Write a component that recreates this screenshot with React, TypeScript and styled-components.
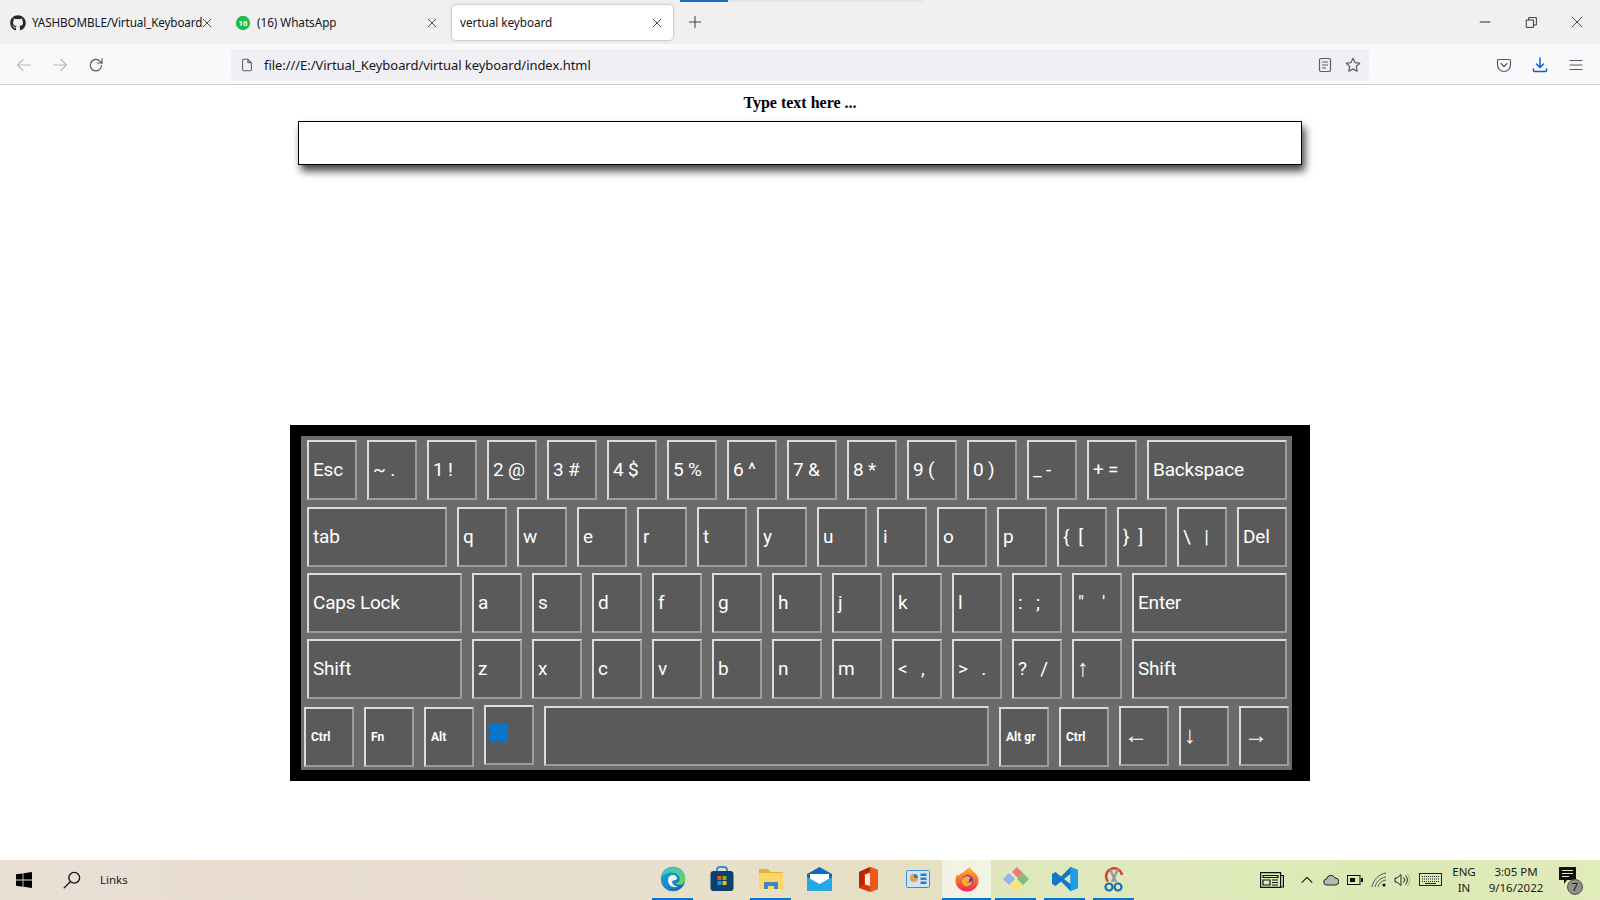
import React from "react";
import styled, { createGlobalStyle } from "styled-components";
import { FaGithub } from "react-icons/fa";

const Global = createGlobalStyle`
  html, body { margin: 0; padding: 0; height: 100%; background: #fff; overflow: hidden; }
  * { box-sizing: border-box; }
`;
const UI = `"Noto Sans", "Open Sans", Arial, sans-serif`;

const Page = styled.div`display: flex; flex-direction: column; width: 1600px; height: 900px; background: #fff;`;

/* ---------- browser chrome ---------- */
const TabStrip = styled.header`
  position: relative; display: flex; align-items: flex-start; height: 44px; padding: 5px 0 0 2px; gap: 3px;
  background: #f0f0f0; font: 11.7px ${UI}; color: #15141a;
`;
const Progress = styled.div`position: absolute; left: 680px; top: 0; width: 242px; height: 2px; background: #e4e4e4;`;
const ProgressFill = styled.div`width: 48px; height: 2px; background: #1a6fc4;`;
const Tab = styled.div<{ $active?: boolean; $w?: number; $pr?: number }>`
  display: flex; align-items: center; gap: 6px; height: 35px; width: ${p => p.$w ?? 221}px; padding: 0 ${p => p.$pr ?? 10}px 0 8px;
  border-radius: 4px; background: ${p => (p.$active ? "#fff" : "transparent")};
  box-shadow: ${p => (p.$active ? "0 0 3px rgba(0,0,0,.35)" : "none")};
`;
const TabTitle = styled.span<{ $tight?: boolean }>`
  flex: 1; min-width: 0; white-space: nowrap; padding-bottom: 2px; letter-spacing: ${p => (p.$tight ? -0.12 : -0.02)}px;
`;
const Fav = styled.span`display: flex; width: 16px; height: 16px; flex: none; font-size: 16px; color: #24292f;`;
const NewTab = styled.div`display: flex; align-items: center; justify-content: center; width: 36px; height: 35px; margin-left: 1px; padding-bottom: 1px;`;
const WinControls = styled.div`display: flex; margin-left: auto; margin-top: -5px;`;
const WinButton = styled.div`display: flex; align-items: center; justify-content: center; width: 46px; height: 44px;`;

const Toolbar = styled.nav`
  display: flex; align-items: center; height: 41px; padding: 1px 0 0 6px; background: #f9f9fb;
  border-bottom: 1px solid #cfcfd2;
`;
const ToolBtn = styled.div`display: flex; align-items: center; justify-content: center; width: 36px; height: 32px; flex: none;`;
const NavGroup = styled.div`display: flex; width: 225px; flex: none;`;
const UrlBar = styled.div`
  display: flex; align-items: center; width: 1138px; height: 32px; padding: 0 2px 0 9px; border-radius: 4px; background: #f0f0f4;
  font: 13px ${UI}; color: #15141a; letter-spacing: -0.05px;
`;
const UrlText = styled.span`flex: 1; margin-left: 10px; white-space: pre;`;
const UrlBtn = styled.div`display: flex; align-items: center; justify-content: center; width: 28px; height: 28px;`;
const ToolRight = styled.div`display: flex; margin-left: auto; padding-right: 6px;`;

/* ---------- content ---------- */
const Main = styled.main`flex: 1; display: flex; flex-direction: column; align-items: center; padding-top: 9px;`;
const Label = styled.label`font: bold 16px/18px "Liberation Serif", "Times New Roman", serif; color: #000; margin-bottom: 9px;`;
const TextBox = styled.input`
  display: block; width: 1004px; height: 44px; border: 1px solid #000; border-radius: 0; background: #fff; outline: none;
  box-shadow: 3px 6px 8px #444;
`;
const Frame = styled.section`
  width: 1020px; height: 356px; margin-top: 260px; padding: 11px 18px 11px 11px; background: #000;
`;
const Deck = styled.div`
  display: flex; flex-direction: column; gap: 6px; height: 334px; padding-top: 4px; background: #6b6b6b;
`;
const Row = styled.div<{ $inset?: number; $extra?: number }>`
  display: flex; gap: 10px; padding-left: ${p => p.$inset ?? 6}px; margin-bottom: ${p => p.$extra ?? 0}px;
`;
const Key = styled.div<{ $w?: number; $kind?: "small" | "arrow"; $drop?: number }>`
  display: flex; align-items: center; width: ${p => p.$w ?? 50}px; height: 60px; flex: none;
  padding-left: ${p => (p.$kind === "small" ? 5 : p.$kind === "arrow" ? 3 : 4)}px;
  padding-bottom: ${p => (p.$kind === "small" ? 0 : p.$kind === "arrow" ? 3 : 2)}px;
  margin-top: ${p => p.$drop ?? 0}px;
  border: 2px solid; border-color: #dcdcdc #9c9c9c #9c9c9c #dcdcdc; background: #5a5a5a; color: #fff;
  font: ${p =>
    p.$kind === "small" ? `bold 12px Roboto, Arial, sans-serif`
    : p.$kind === "arrow" ? `24px "Liberation Sans", Arial, sans-serif`
    : `19px Roboto, Arial, sans-serif`};
  letter-spacing: ${p => (p.$kind ? 0 : -0.2)}px;
  white-space: pre;
`;
const WinLogo = styled.svg`display: block; margin-top: -2px;`;

/* ---------- taskbar ---------- */
const Taskbar = styled.footer`
  display: flex; align-items: stretch; height: 40px;
  background: linear-gradient(90deg, #eadfd4 0%, #e9ddd2 20%, #e8dfcc 40%, #e6e0c2 58%, #dfe7bd 64%, #dfe9ba 75%, #dce9b4 88%, #e1ebbb 100%);
  font: 11.5px ${UI}; color: #1a1a1a;
`;
const LeftGroup = styled.div`display: flex; align-items: center; width: 648px; flex: none;`;
const StartBtn = styled.div`display: flex; align-items: center; justify-content: center; width: 48px; height: 40px;`;
const Links = styled.span`margin-left: 4px; padding-bottom: 2px;`;
const Apps = styled.div`display: flex;`;
const App_ = styled.div<{ $open?: boolean; $focus?: boolean }>`
  position: relative; display: flex; align-items: center; justify-content: center; width: 49px; height: 40px; padding-bottom: 2px;
  background: ${p => (p.$focus ? "rgba(255,255,255,.55)" : "transparent")};
  &::after {
    content: ""; display: ${p => (p.$open ? "block" : "none")}; position: absolute; bottom: 0; height: 2px; background: #0078d4;
    left: ${p => (p.$focus ? 0 : 4)}px; right: ${p => (p.$focus ? 0 : 4)}px;
  }
`;
const Tray = styled.div`display: flex; margin-left: auto; padding-right: 15px;`;
const TrayItem = styled.div<{ $w: number }>`
  position: relative; display: flex; flex-direction: column; align-items: center; justify-content: center;
  width: ${p => p.$w}px; height: 40px; padding-bottom: 1px; line-height: 16px; text-align: center;
`;
const NotifyBadge = styled.span`
  position: absolute; left: 16px; top: 19px; width: 16px; height: 16px; border-radius: 50%; background: #8f8f88;
  border: 1px solid #555; font: 11px/14px ${UI}; color: #111; text-align: center;
`;

/* ---------- icons ---------- */
const S = (p: React.SVGProps<SVGSVGElement> & { s?: number; c?: string }) => {
  const { s = 16, c = "#5b5b66", ...r } = p;
  return <svg width={s} height={s} viewBox="0 0 16 16" fill="none" stroke={c} strokeWidth={1.2} strokeLinecap="round" strokeLinejoin="round" {...r} />;
};
const CloseX = ({ s = 12, c = "#3a3a40" }: { s?: number; c?: string }) => (
  <S s={s} c={c} style={{ flex: "none" }}><path d="M2.5 2.5l11 11M13.5 2.5l-11 11" strokeLinecap="butt" /></S>
);
const WaFav = () => (
  <svg width="16" height="16" viewBox="0 0 16 16"><circle cx="8" cy="8" r="7.2" fill="#1ebe4d" /><text x="8" y="11" fontSize="8" fontWeight="700" fontFamily="Roboto, sans-serif" fill="#fff" textAnchor="middle">16</text></svg>
);

const Edge = () => (
  <svg width="26" height="26" viewBox="0 0 26 26">
    <defs>
      <linearGradient id="eg" x1="0" y1="0" x2="1" y2="1"><stop offset="0" stopColor="#1fa5d8" /><stop offset=".55" stopColor="#1b86cf" /><stop offset="1" stopColor="#0c59a4" /></linearGradient>
      <linearGradient id="eg2" x1="0" y1="0" x2="1" y2="1"><stop offset="0" stopColor="#35c1c9" /><stop offset="1" stopColor="#6fd65a" /></linearGradient>
    </defs>
    <circle cx="13" cy="13" r="12.2" fill="url(#eg)" />
    <path d="M13 .8C20 .8 25.2 6 25.2 13c0 3.5-2.4 5.8-5.6 5.8-2 0-3.6-.6-4.4-1.5 2.6-.3 4.6-2 4.6-4.3 0-3.4-3.4-6.6-8-6.6C7 6.4 3.6 8.5 1.6 11.4 2.6 5.4 7.3.8 13 .8z" fill="url(#eg2)" />
    <path d="M8 14c0-3 2.4-5 5-5 2.4 0 4 1.6 4 3.2 0 1.3-1.4 2-2.8 2-1.8 0-2.5 1.2-1.8 3 .7 1.8 3 3 5.4 3-2 1.2-5.6 1.4-7.4-.4C8.700 18.200 8 16.200 8 14z" fill="#eef6e8" />
  </svg>
);
const Store = () => (
  <svg width="24" height="26" viewBox="0 0 24 26">
    <path d="M7 6V4a3 3 0 013-3h4a3 3 0 013 3v2" fill="none" stroke="#2f8fd6" strokeWidth="2" />
    <rect x="0.500" y="5" width="23" height="20" rx="3" fill="#0f3f6f" />
    <rect x="7.500" y="10" width="4" height="4" fill="#f25022" /><rect x="12.500" y="10" width="4" height="4" fill="#7fba00" />
    <rect x="7.500" y="15" width="4" height="4" fill="#00a4ef" /><rect x="12.500" y="15" width="4" height="4" fill="#ffb900" />
  </svg>
);
const Folder = () => (
  <svg width="24" height="22" viewBox="0 0 24 22">
    <path d="M0 2a1 1 0 011-1h8l3 3h11a1 1 0 011 1v15a1 1 0 01-1 1H1a1 1 0 01-1-1z" fill="#e5b23a" />
    <rect y="5" width="24" height="16" rx="1" fill="#fbd669" />
    <path d="M5 21v-7h14v7h-4v-3H9v3z" fill="#3d86c6" />
  </svg>
);
const Mail = () => (
  <svg width="25" height="24" viewBox="0 0 25 24">
    <path d="M0 7L12.500 0 25 7v16a1 1 0 01-1 1H1a1 1 0 01-1-1z" fill="#0f6cbd" />
    <path d="M3 7h19v7l-9.500 5L3 14z" fill="#fff" />
    <path d="M0 10l12.500 7L25 10v13a1 1 0 01-1 1H1a1 1 0 01-1-1z" fill="#29a6e6" />
  </svg>
);
const Office = () => (
  <svg width="19" height="25" viewBox="0 0 19 25">
    <path d="M0 5l11-5 8 3v19l-8 3-11-4z" fill="#d83b01" />
    <path d="M11 0l8 3v19l-8 3z" fill="#ea5a1e" />
    <path d="M6 7.500l5-1.500v13l-5-1.500z" fill="#fbe9df" />
    <path d="M0 5l11-5v4L5 6.500v11.300L0 21z" fill="#b7260f" />
  </svg>
);
const Panel = () => (
  <svg width="24" height="18" viewBox="0 0 24 18">
    <rect x=".5" y=".5" width="23" height="17" rx="1" fill="#cfe6f7" stroke="#3f8fcf" />
    <circle cx="8" cy="8" r="4" fill="#e9a23b" /><path d="M8 8V4a4 4 0 014 4z" fill="#2f7fc4" />
    <rect x="14.500" y="3.500" width="6" height="2.500" fill="#2f7fc4" /><rect x="14.500" y="7.500" width="6" height="2.500" fill="#2f7fc4" /><rect x="14.500" y="11.500" width="6" height="2.500" fill="#2f7fc4" />
  </svg>
);
const Firefox = () => (
  <svg width="24" height="25" viewBox="0 0 24 25">
    <defs><linearGradient id="ff" x1="0" y1="0" x2="0" y2="1"><stop offset="0" stopColor="#ffb52e" /><stop offset=".55" stopColor="#ff6a2b" /><stop offset="1" stopColor="#e8275a" /></linearGradient></defs>
    <path d="M12 24.500C5.500 24.500 .5 19.500 .5 13.500c0-2.500.8-5 2-6.500l1 2C5 6.500 7 5.500 8.500 5.500 10 3 13 2 15 0c.5 2.500 2 3 4 5 3 2.500 4.500 5.500 4.500 8.500 0 6-5 11-11.500 11z" fill="url(#ff)" />
    <circle cx="12.500" cy="13.500" r="5.500" fill="#6b2fb5" />
    <path d="M8 11c2-2 5-2.500 7-1 1 1 .5 2-1 2 1 2-1 4-3 3.500 2 .5 4.500 0 6-2 .6 4-3.500 6.500-6.500 5.500C7 18 6 14 8 11z" fill="#ffab2e" />
  </svg>
);
const GitApp = () => (
  <svg width="26" height="26" viewBox="0 0 26 26">
    <path d="M6 7l6 6-6 6-6-6z" fill="#8fb8e8" /><path d="M13 0l6 6-5 5-6-6z" fill="#e8807a" transform="translate(1 1)" />
    <path d="M20 7l6 6-6 6-6-6z" fill="#7fbf7a" /><path d="M13 14l6 6-6 6-6-6z" fill="#fde27a" />
  </svg>
);
const VSCode = () => (
  <svg width="26" height="26" viewBox="0 0 26 26">
    <path d="M18.500 1L26 4v18l-7.500 3L9 15.500 3.500 20 0 18v-10l3.500-2L9 10.500zM18.500 8L12 13l6.500 5z" fill="#0f79c8" />
    <path d="M18.500 1L26 4v18l-7.500 3z M18.500 8v10" fill="#1f9de8" fillRule="evenodd" />
  </svg>
);
const Snip = () => (
  <svg width="22" height="26" viewBox="0 0 22 26">
    <path d="M5 15.500A8 8 0 1119 9" fill="none" stroke="#d8432c" strokeWidth="2.500" />
    <path d="M7 3l6 13M15 3L9 16" stroke="#9a9a9a" strokeWidth="2.500" />
    <circle cx="6" cy="21" r="3.500" fill="none" stroke="#1670b8" strokeWidth="2.200" />
    <circle cx="15" cy="21" r="3.500" fill="none" stroke="#1670b8" strokeWidth="2.200" />
  </svg>
);

const rows: { label: string; w?: number; kind?: "arrow" }[][] = [
  [{ label: "Esc" }, { label: "~ ." }, { label: "1 !" }, { label: "2 @" }, { label: "3 #" }, { label: "4 $" }, { label: "5 %" }, { label: "6 ^" }, { label: "7 &" }, { label: "8 *" }, { label: "9 (" }, { label: "0 )" }, { label: "_ -" }, { label: "+ =" }, { label: "Backspace", w: 140 }],
  [{ label: "tab", w: 140 }, ...["q", "w", "e", "r", "t", "y", "u", "i", "o", "p", "{  [", "}  ]", "\\   |", "Del"].map(label => ({ label }))],
  [{ label: "Caps Lock", w: 155 }, ...["a", "s", "d", "f", "g", "h", "j", "k", "l", ":   ;", "\"    '"].map(label => ({ label })), { label: "Enter", w: 155 }],
  [{ label: "Shift", w: 155 }, ...["z", "x", "c", "v", "b", "n", "m", "<   ,", ">   .", "?   /"].map(label => ({ label })), { label: "↑", kind: "arrow" as const }, { label: "Shift", w: 155 }],
];

export default function App() {
  return (
    <Page>
      <Global />
      <TabStrip>
        <Progress><ProgressFill /></Progress>
        <Tab $w={222} $pr={11}>
          <Fav><FaGithub /></Fav>
          <TabTitle $tight>YASHBOMBLE/Virtual_Keyboard</TabTitle>
          <CloseX />
        </Tab>
        <Tab $w={222} $pr={11}>
          <Fav><WaFav /></Fav>
          <TabTitle>(16) WhatsApp</TabTitle>
          <CloseX />
        </Tab>
        <Tab $active>
          <TabTitle>vertual keyboard</TabTitle>
          <CloseX />
        </Tab>
        <NewTab><S s={14} c="#45454d"><path d="M8 1.500v13M1.500 8h13" /></S></NewTab>
        <WinControls>
          <WinButton><S s={12} c="#111"><path d="M1 8h14" strokeLinecap="butt" /></S></WinButton>
          <WinButton><S s={13} c="#111" strokeWidth={1}><path d="M1.500 5h9v9h-9zM4.500 5V2h9.500v9h-3.500" strokeLinecap="butt" strokeLinejoin="miter" /></S></WinButton>
          <WinButton><S s={12} c="#111" strokeWidth={1}><path d="M1 1l14 14M15 1L1 15" strokeLinecap="butt" /></S></WinButton>
        </WinControls>
      </TabStrip>
      <Toolbar>
        <NavGroup>
          <ToolBtn><S c="#b9b9be"><path d="M14.500 8h-13M7 2.500L1.500 8 7 13.500" /></S></ToolBtn>
          <ToolBtn><S c="#b9b9be"><path d="M1.500 8h13M9 2.500L14.500 8 9 13.500" /></S></ToolBtn>
          <ToolBtn><S><path d="M13.500 8.500A5.600 5.600 0 112.600 6.500 5.600 5.600 0 0112 4.200L14 6" /><path d="M14 1.500V6H9.500" /></S></ToolBtn>
        </NavGroup>
        <UrlBar>
          <S s={14}><path d="M3 2.500a1 1 0 011-1h5l4 4v8a1 1 0 01-1 1H4a1 1 0 01-1-1zM9 1.500v4h4" /></S>
          <UrlText>file:///E:/Virtual_Keyboard/virtual keyboard/index.html</UrlText>
          <UrlBtn><S><rect x="2.500" y="1.500" width="11" height="13" rx="1.500" /><path d="M5.500 5h5M5.500 8h5M5.500 11h3" /></S></UrlBtn>
          <UrlBtn><S><path d="M8 1.300l2 4.300 4.700.6-3.400 3.300.9 4.700L8 11.900l-4.200 2.300.9-4.700L1.300 6.200 6 5.600z" /></S></UrlBtn>
        </UrlBar>
        <ToolRight>
          <ToolBtn><S><path d="M2.500 2.500h11a1 1 0 011 1V8a6.500 6.500 0 01-13 0V3.500a1 1 0 011-1z" /><path d="M5 6.500l3 3 3-3" /></S></ToolBtn>
          <ToolBtn><S c="#0a60d8" strokeWidth={1.500}><path d="M8 1v9M4.500 7L8 10.500 11.500 7M1.500 12v1.500a1 1 0 001 1h11a1 1 0 001-1V12" /></S></ToolBtn>
          <ToolBtn><S><path d="M2 3.500h12M2 8h12M2 12.500h12" /></S></ToolBtn>
        </ToolRight>
      </Toolbar>

      <Main>
        <Label htmlFor="typed">Type text here ...</Label>
        <TextBox id="typed" />
        <Frame>
          <Deck>
            {rows.map((row, i) => (
              <Row key={i} $extra={i === 0 ? 1 : 0}>
                {row.map((k, j) => <Key key={j} $w={k.w} $kind={k.kind}>{k.label}</Key>)}
              </Row>
            ))}
            <Row $inset={3}>
              <Key $kind="small" $drop={2}>Ctrl</Key>
              <Key $kind="small" $drop={2}>Fn</Key>
              <Key $kind="small" $drop={2}>Alt</Key>
              <Key>
                <WinLogo width="18" height="18" viewBox="0 0 18 18" fill="#0078d4">
                  <rect width="8.700" height="8.700" /><rect x="9.300" width="8.700" height="8.700" />
                  <rect y="9.300" width="8.700" height="8.700" /><rect x="9.300" y="9.300" width="8.700" height="8.700" />
                </WinLogo>
              </Key>
              <Key $w={445} $drop={1} />
              <Key $kind="small" $drop={2}>Alt gr</Key>
              <Key $kind="small" $drop={2}>Ctrl</Key>
              <Key $kind="arrow" $drop={1}>←</Key>
              <Key $kind="arrow" $drop={1}>↓</Key>
              <Key $kind="arrow" $drop={1}>→</Key>
            </Row>
          </Deck>
        </Frame>
      </Main>

      <Taskbar>
        <LeftGroup>
          <StartBtn>
            <svg width="16" height="16" viewBox="0 0 16 16" fill="#000"><path d="M0 2.300l6.600-.9v6.200H0zM7.400 1.300L16 0v7.600H7.400zM0 8.400h6.600v6.300L0 13.700zM7.400 8.400H16V16l-8.600-1.200z" /></svg>
          </StartBtn>
          <StartBtn>
            <S s={18} c="#111"><circle cx="10" cy="6" r="4.800" /><path d="M6.500 9.500L1 15" /></S>
          </StartBtn>
          <Links>Links</Links>
        </LeftGroup>
        <Apps>
          <App_ $open><Edge /></App_>
          <App_><Store /></App_>
          <App_ $open><Folder /></App_>
          <App_><Mail /></App_>
          <App_><Office /></App_>
          <App_><Panel /></App_>
          <App_ $open $focus><Firefox /></App_>
          <App_ $open><GitApp /></App_>
          <App_ $open><VSCode /></App_>
          <App_ $open><Snip /></App_>
        </Apps>
        <Tray>
          <TrayItem $w={46}>
            <svg width="24" height="16" viewBox="0 0 24 16" fill="none" stroke="#111" strokeWidth="1.200"><path d="M.6.600h20v14.800H.6zM21 3.500h2.400V15H21" /><path d="M3 3.500h15v2H3zM3 8h7v5H3zM12 8h6M12 10.500h6M12 13h6" /></svg>
          </TrayItem>
          <TrayItem $w={24}><S s={14} c="#111"><path d="M2 11l6-6 6 6" strokeLinecap="butt" /></S></TrayItem>
          <TrayItem $w={24}>
            <svg width="16" height="12" viewBox="0 0 16 12" fill="#b8b8b0" stroke="#222" strokeWidth="1"><path d="M4 11a3 3 0 01-.5-6A4.500 4.500 0 0112 4a3.500 3.500 0 01.500 7z" /></svg>
          </TrayItem>
          <TrayItem $w={24}>
            <svg width="16" height="10" viewBox="0 0 16 10"><rect x=".5" y=".5" width="12.500" height="9" fill="none" stroke="#111" /><rect x="3" y="3" width="5" height="4" fill="#111" /><rect x="14" y="3" width="2" height="4" fill="#111" /></svg>
          </TrayItem>
          <TrayItem $w={24}>
            <svg width="16" height="16" viewBox="0 0 16 16" fill="none" stroke="#555" strokeWidth="1"><path d="M1 15C2 8 8 2 15 1M4 15c1-5 5-9 11-10M7 15c.6-3 3-6 8-7" /><circle cx="13" cy="13" r="1.600" fill="#111" stroke="none" /></svg>
          </TrayItem>
          <TrayItem $w={22}>
            <svg width="16" height="14" viewBox="0 0 16 14" fill="none" stroke="#222" strokeWidth="1"><path d="M1 5v4h2l4 3.500v-11L3 5z" /><path d="M9.500 4.500a3.500 3.500 0 010 5M11.500 2.500a6.500 6.500 0 010 9" /><path d="M13.500 1a9 9 0 010 12" stroke="#aaa" /></svg>
          </TrayItem>
          <TrayItem $w={34}>
            <svg width="23" height="13" viewBox="0 0 23 13" fill="none" stroke="#222" strokeWidth="1"><rect x=".5" y=".5" width="22" height="12" /><path d="M3 3.500h17M3 6h17M3 8.500h17" strokeDasharray="1 1" /><path d="M6 10.500h11" /></svg>
          </TrayItem>
          <TrayItem $w={34}><span>ENG</span><span>IN</span></TrayItem>
          <TrayItem $w={70}><span>3:05 PM</span><span>9/16/2022</span></TrayItem>
          <TrayItem $w={34}>
            <svg width="17" height="18" viewBox="0 0 17 18" style={{ marginTop: -7, marginLeft: -2 }}><path d="M0 0h17v13H8l-3 4v-4H0z" fill="#111" /><path d="M3 3.500h11M3 6.500h11M3 9.500h7" stroke="#e0e8c0" /></svg>
            <NotifyBadge>7</NotifyBadge>
          </TrayItem>
        </Tray>
      </Taskbar>
    </Page>
  );
}
